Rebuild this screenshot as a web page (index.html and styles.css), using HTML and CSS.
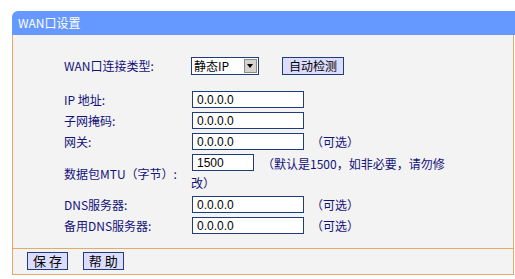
FILE: index.html
```html
<!DOCTYPE html>
<html lang="zh-CN">
<head>
  <meta charset="UTF-8" />
  <title>WAN口设置</title>
  <link rel="stylesheet" href="styles.css">
</head>
<body>
  <div class="panel">
    <div class="panel-title">WAN口设置</div>

    <div class="panel-body">
      <div class="form">
        <label class="lbl first">WAN口连接类型:</label>
        <div class="fld first">
          <span class="select">
            <span class="select-text">静态IP</span>
            <span class="select-arrow"></span>
          </span>
          <button class="btn detect">自动检测</button>
        </div>

        <label class="lbl">IP 地址:</label>
        <div class="fld"><input class="txt" type="text" value="0.0.0.0"></div>

        <label class="lbl">子网掩码:</label>
        <div class="fld"><input class="txt" type="text" value="0.0.0.0"></div>

        <label class="lbl">网关:</label>
        <div class="fld"><input class="txt" type="text" value="0.0.0.0"><span class="hint">（可选）</span></div>

        <label class="lbl">数据包MTU（字节）:</label>
        <div class="fld wrap"><input class="txt short" type="text" value="1500"><span class="hint">（默认是1500，如非必要，请勿修改）</span></div>

        <label class="lbl">DNS服务器:</label>
        <div class="fld"><input class="txt" type="text" value="0.0.0.0"><span class="hint">（可选）</span></div>

        <label class="lbl">备用DNS服务器:</label>
        <div class="fld"><input class="txt" type="text" value="0.0.0.0"><span class="hint">（可选）</span></div>
      </div>
    </div>

    <div class="panel-foot">
      <button class="btn">保 存</button>
      <button class="btn">帮 助</button>
    </div>
  </div>
</body>
</html>
```

FILE: styles.css
```css
body {
  margin: 0;
  background-color: #ffffff;
  font-family: "Noto Sans CJK SC", sans-serif;
  font-size: 12px;
}
.panel {
  width: 503px;
  margin: 11px 0 0 12px;
}
.panel-title {
  height: 24px;
  line-height: 24px;
  padding-left: 6px;
  background-color: #6699ff;
  color: #ffffff;
  border-top-left-radius: 6px;
}
.panel-body, .panel-foot {
  width: 502px;
  box-sizing: border-box;
  background-color: #f3f3f3;
  border-left: 1px solid #e8a866;
  border-right: 1px solid #e8a866;
}
.panel-body {
  padding: 22px 0 14px 51px;
}
.form {
  display: grid;
  grid-template-columns: 127px auto;
  row-gap: 4px;
  align-items: center;
  color: #12127a;
}
.lbl {
  line-height: 17px;
}
.first {
  margin-bottom: 13px;
}
.fld {
  display: flex;
  align-items: center;
  height: 17px;
}
.fld.wrap {
  display: block;
  height: 38px;
  width: 258px;
  line-height: 19px;
  overflow: hidden;
}
.txt {
  box-sizing: border-box;
  width: 112px;
  height: 17px;
  margin: 0 0 0 1px;
  padding: 0 4px;
  border: 1px solid #1f3c7c;
  background-color: #ffffff;
  font-family: "Liberation Sans", sans-serif;
  font-size: 12px;
  color: #000000;
  outline: none;
}
.txt.short {
  width: 62px;
  vertical-align: top;
}
.hint {
  margin-left: 7px;
}
.wrap .hint {
  margin-left: 8px;
}
.select {
  display: flex;
  align-items: center;
  box-sizing: border-box;
  width: 68px;
  height: 18px;
  border: 1px solid #1f3c7c;
  background-color: #ffffff;
  color: #000000;
}
.select-text {
  flex: 1;
  padding-left: 2px;
  line-height: 16px;
}
.select-arrow {
  position: relative;
  box-sizing: border-box;
  width: 13px;
  height: 14px;
  margin-right: 1px;
  background-color: #d6d3ce;
  border: 1px solid #8a8a8a;
}
.select-arrow::after {
  content: "";
  position: absolute;
  left: 2px;
  top: 4px;
  border-left: 3.5px solid transparent;
  border-right: 3.5px solid transparent;
  border-top: 4px solid #000000;
}
.btn {
  box-sizing: border-box;
  height: 18px;
  padding: 0 6px;
  border: 1px solid #1f3c7c;
  background-color: #dcdcfc;
  color: #000000;
  font-family: "Noto Sans CJK SC", sans-serif;
  font-size: 12px;
  line-height: 16px;
}
.detect {
  width: 62px;
  margin-left: 23px;
  padding: 0;
}
.panel-foot {
  height: 27px;
  padding: 3px 0 0 14px;
  border-top: 1px solid #e8a866;
  border-bottom: 1px solid #e8a866;
}
.panel-foot .btn {
  width: 41px;
  margin-right: 12px;
  padding: 0;
  font-size: 13px;
}
```
